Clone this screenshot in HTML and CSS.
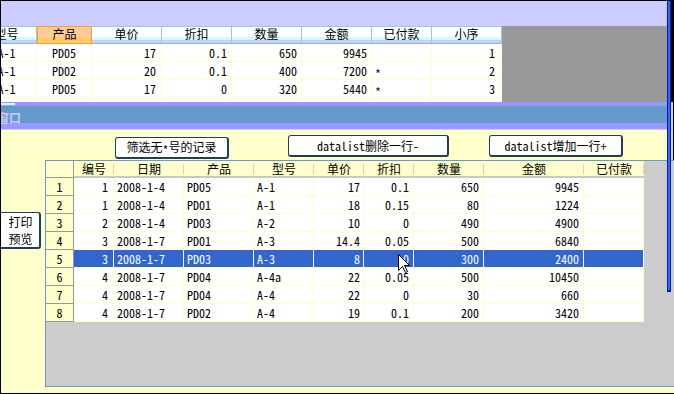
FILE: index.html
```html
<!DOCTYPE html>
<html lang="zh-CN">
<head>
<meta charset="UTF-8" />
<title>datalist 窗口</title>
<link rel="stylesheet" href="styles.css">
</head>
<body>
<div class="screen">
  <!-- back window: sheet with 小序 column -->
  <div class="back-caption"></div>
  <div class="back-body">
    <div class="sheet">
      <div class="sheet-head">
        <div class="sh s-model">型号</div>
        <div class="sh s-prod active">产品</div>
        <div class="sh s-price">单价</div>
        <div class="sh s-disc">折扣</div>
        <div class="sh s-qty">数量</div>
        <div class="sh s-amt">金额</div>
        <div class="sh s-paid">已付款</div>
        <div class="sh s-seq">小序</div>
      </div>
      <div class="sheet-row">
        <div class="sc s-model center">A-1</div>
        <div class="sc s-prod center">PD05</div>
        <div class="sc s-price num">17</div>
        <div class="sc s-disc num">0.1</div>
        <div class="sc s-qty num">650</div>
        <div class="sc s-amt num">9945</div>
        <div class="sc s-paid"></div>
        <div class="sc s-seq num">1</div>
      </div>
      <div class="sheet-row">
        <div class="sc s-model center">A-1</div>
        <div class="sc s-prod center">PD02</div>
        <div class="sc s-price num">20</div>
        <div class="sc s-disc num">0.1</div>
        <div class="sc s-qty num">400</div>
        <div class="sc s-amt num">7200</div>
        <div class="sc s-paid"><span class="star">*</span></div>
        <div class="sc s-seq num">2</div>
      </div>
      <div class="sheet-row">
        <div class="sc s-model center">A-1</div>
        <div class="sc s-prod center">PD05</div>
        <div class="sc s-price num">17</div>
        <div class="sc s-disc num">0</div>
        <div class="sc s-qty num">320</div>
        <div class="sc s-amt num">5440</div>
        <div class="sc s-paid"><span class="star">*</span></div>
        <div class="sc s-seq num">3</div>
      </div>
      <div class="sheet-row">
        <div class="sc s-model"></div>
        <div class="sc s-prod"></div>
        <div class="sc s-price"></div>
        <div class="sc s-disc"></div>
        <div class="sc s-qty"></div>
        <div class="sc s-amt"></div>
        <div class="sc s-paid"></div>
        <div class="sc s-seq"></div>
      </div>
    </div>
  </div>

  <!-- front window -->
  <div class="titlebar"><span class="title-text">窗口</span></div>
  <div class="child">
    <div class="btn-row">
      <button class="btn btn-filter">筛选无<span class="star">*</span>号的记录</button>
      <button class="btn btn-del"><span class="latin">datalist</span>删除一行-</button>
      <button class="btn btn-add"><span class="latin">datalist</span>增加一行+</button>
    </div>
    <div class="work">
      <div class="side">
        <button class="btn btn-print">打印<br>预览</button>
      </div>
      <div class="grid">
        <div class="g-head">
          <div class="g-corner"></div>
          <div class="gh g-no">编号</div>
          <div class="gh g-date">日期</div>
          <div class="gh g-prod">产品</div>
          <div class="gh g-model">型号</div>
          <div class="gh g-price">单价</div>
          <div class="gh g-disc">折扣</div>
          <div class="gh g-qty">数量</div>
          <div class="gh g-amt">金额</div>
          <div class="gh g-paid">已付款</div>
        </div>
        <div class="g-row">
          <div class="g-sel">1</div>
          <div class="gc g-no num">1</div><div class="gc g-date">2008-1-4</div><div class="gc g-prod">PD05</div><div class="gc g-model">A-1</div>
          <div class="gc g-price num">17</div><div class="gc g-disc num">0.1</div><div class="gc g-qty num">650</div><div class="gc g-amt num">9945</div><div class="gc g-paid"></div>
        </div>
        <div class="g-row">
          <div class="g-sel">2</div>
          <div class="gc g-no num">1</div><div class="gc g-date">2008-1-4</div><div class="gc g-prod">PD01</div><div class="gc g-model">A-1</div>
          <div class="gc g-price num">18</div><div class="gc g-disc num">0.15</div><div class="gc g-qty num">80</div><div class="gc g-amt num">1224</div><div class="gc g-paid"></div>
        </div>
        <div class="g-row">
          <div class="g-sel">3</div>
          <div class="gc g-no num">2</div><div class="gc g-date">2008-1-4</div><div class="gc g-prod">PD03</div><div class="gc g-model">A-2</div>
          <div class="gc g-price num">10</div><div class="gc g-disc num">0</div><div class="gc g-qty num">490</div><div class="gc g-amt num">4900</div><div class="gc g-paid"></div>
        </div>
        <div class="g-row">
          <div class="g-sel">4</div>
          <div class="gc g-no num">3</div><div class="gc g-date">2008-1-7</div><div class="gc g-prod">PD01</div><div class="gc g-model">A-3</div>
          <div class="gc g-price num">14.4</div><div class="gc g-disc num">0.05</div><div class="gc g-qty num">500</div><div class="gc g-amt num">6840</div><div class="gc g-paid"></div>
        </div>
        <div class="g-row selected">
          <div class="g-sel">5</div>
          <div class="gc g-no num">3</div><div class="gc g-date">2008-1-7</div><div class="gc g-prod">PD03</div><div class="gc g-model">A-3</div>
          <div class="gc g-price num">8</div><div class="gc g-disc num">0</div><div class="gc g-qty num">300</div><div class="gc g-amt num">2400</div><div class="gc g-paid"></div>
        </div>
        <div class="g-row">
          <div class="g-sel">6</div>
          <div class="gc g-no num">4</div><div class="gc g-date">2008-1-7</div><div class="gc g-prod">PD04</div><div class="gc g-model">A-4a</div>
          <div class="gc g-price num">22</div><div class="gc g-disc num">0.05</div><div class="gc g-qty num">500</div><div class="gc g-amt num">10450</div><div class="gc g-paid"></div>
        </div>
        <div class="g-row">
          <div class="g-sel">7</div>
          <div class="gc g-no num">4</div><div class="gc g-date">2008-1-7</div><div class="gc g-prod">PD04</div><div class="gc g-model">A-4</div>
          <div class="gc g-price num">22</div><div class="gc g-disc num">0</div><div class="gc g-qty num">30</div><div class="gc g-amt num">660</div><div class="gc g-paid"></div>
        </div>
        <div class="g-row">
          <div class="g-sel">8</div>
          <div class="gc g-no num">4</div><div class="gc g-date">2008-1-7</div><div class="gc g-prod">PD02</div><div class="gc g-model">A-4</div>
          <div class="gc g-price num">19</div><div class="gc g-disc num">0.1</div><div class="gc g-qty num">200</div><div class="gc g-amt num">3420</div><div class="gc g-paid"></div>
        </div>
        <svg class="cursor" width="13" height="20" viewBox="0 0 13 20" aria-hidden="true">
          <path d="M0.5 0.5 L0.5 16.5 L4.5 12.5 L7.5 18.5 L9.5 17.5 L6.5 11.5 L11.5 11.5 Z" fill="#fff" stroke="#000" stroke-width="1"/>
        </svg>
      </div>
    </div>
  </div>

  <div class="back-edge"></div>
</div>
</body>
</html>
```

FILE: styles.css
```css
* { box-sizing: border-box; }
html, body {
  margin: 0; padding: 0;
  background: #000;
}
body {
  width: 674px; height: 394px;
  overflow: hidden;
  font-family: "Noto Sans Mono CJK SC", "Liberation Mono", "Noto Sans CJK SC", monospace;
  font-size: 12px;
  color: #000;
}
.screen {
  position: relative;
  width: 674px; height: 394px;
  border: 1px solid #000;
  border-right: none;
  overflow: hidden;
  display: flex;
  flex-direction: column;
  background: #ffffcc;
}
.star {
  display: inline-block;
  vertical-align: -3px;
}

/* back window */
.back-caption {
  flex: none;
  height: 25px;
  background: #ccccff;
  border-right: 3px solid #000;
}
.back-body {
  flex: none;
  height: 76px;
  display: flex;
  overflow: hidden;
  background: #999999;
  border-right: 3px solid #000;
}
.sheet {
  flex: none;
  width: 525px;
  margin-left: -24px;
  background: #fff;
}
.sheet-head, .sheet-row, .g-head, .g-row { display: flex; }
.sh {
  height: 18px;
  line-height: 14px;
  text-align: center;
  border-top: 1px solid #99cccc;
  border-right: 1px solid #99cccc;
  border-bottom: 1px solid #88bbcc;
  background: linear-gradient(#fff 0 10px, #ccffff 10px 13px, #ccccff 13px);
}
.sh.active {
  border: 1px solid #ff9933;
  background: linear-gradient(#ffcc99 0 10px, #ffcc66 10px);
}
.sc {
  height: 18px;
  line-height: 17px;
  padding: 0 3px;
  white-space: nowrap;
  overflow: hidden;
  border-right: 1px solid #ffffcc;
  border-bottom: 1px solid #ffffcc;
}
.center { text-align: center; }
.sc.num { text-align: right; padding-right: 4px; }
.s-model { width: 60px; }
.s-prod { width: 55px; }
.s-price, .s-disc, .s-qty, .s-amt, .s-seq { width: 70px; }
.s-paid { width: 60px; }
.sc.s-price.num { padding-right: 5px; }
.sc.s-seq.num { padding-right: 6px; }

/* front window title */
.titlebar {
  flex: none;
  height: 28px;
  overflow: hidden;
  padding-top: 10px;
  background:
    linear-gradient(#ccffff, #ccffff) 0 1px / 14px 2px no-repeat,
    linear-gradient(#9999ff 0 4px, #6699cc 4px 21px, #9999ff 21px 27px, #ccccff 27px);
  box-shadow: inset -1px 0 #000, inset -3px 0 #d4d0c8;
}
.title-text {
  display: block;
  margin-left: -4px;
  line-height: 12px;
  font-weight: bold;
  color: #ccccff;
}

.child {
  flex: 1;
  display: flex;
  flex-direction: column;
}
.btn-row {
  flex: none;
  height: 30px;
  display: flex;
  align-items: flex-start;
  padding: 5px 0 0 114px;
  box-shadow: inset -1px 0 #000, inset -3px 0 #d4d0c8;
}
.btn {
  height: 22px;
  padding: 0;
  font: inherit;
  line-height: 18px;
  color: #000;
  background: #fff;
  border: 1px solid #1c3c6c;
  border-right-width: 2px;
  border-bottom-width: 2px;
  border-radius: 3px;
  text-align: center;
}
.btn-filter { width: 114px; margin-top: 2px; }
.btn-del { width: 161px; margin-left: 59px; }
.btn-add { width: 134px; margin-left: 40px; }

.work {
  flex: none;
  display: flex;
  height: 227px;
}
.side {
  flex: none;
  width: 44px;
}
.btn-print {
  width: 43px;
  height: 37px;
  margin: 52px 0 0 -3px;
  padding: 0 0 0 3px;
  line-height: 17px;
}

/* lower grid */
.grid {
  position: relative;
  flex: none;
  width: 640px;
  height: 227px;
  background: #cccccc;
  border: 1px solid #6699cc;
  border-right: none;
}
.g-corner {
  width: 28px;
  height: 17px;
  background: #ffffcc;
  border-right: 1px solid #999;
  border-bottom: 1px solid #999;
}
.gh {
  height: 17px;
  line-height: 15px;
  text-align: center;
  border-bottom: 2px solid #c8c8c8;
  background: #ffffcc linear-gradient(#d8d4b0, #d8d4b0) no-repeat right 0 top 3px / 1px 10px;
}
.g-sel {
  width: 28px;
  height: 18px;
  line-height: 17px;
  text-align: center;
  background: #ffffcc;
  border-right: 1px solid #999;
  border-bottom: 1px solid #999;
}
.gc {
  height: 18px;
  line-height: 17px;
  padding: 0 3px;
  white-space: nowrap;
  overflow: hidden;
  background: #fff;
  border-right: 1px solid #ffffcc;
  border-bottom: 1px solid #ffffcc;
}
.gc.num { text-align: right; padding-right: 4px; }
.gc.g-no.num { padding-right: 5px; }
.gc.g-price.num { padding-right: 3px; }
.g-row.selected .gc {
  background: #3366cc;
  color: #fff;
  border-right-color: #fff;
}
.g-no { width: 40px; }
.g-date, .g-prod, .g-qty { width: 70px; }
.g-model, .g-paid { width: 60px; }
.g-price, .g-disc { width: 50px; }
.g-amt { width: 100px; }

.cursor {
  position: absolute;
  left: 352px;
  top: 93px;
}

/* right border of the back window, drawn over the front one */
.back-edge {
  position: absolute;
  left: 666px;
  top: 0;
  width: 4px;
  height: 291px;
  background: #3366ff;
  border-left: 1px solid #0022aa;
  border-right: 1px solid #0022aa;
  border-bottom: 2px solid #0022aa;
}
```
